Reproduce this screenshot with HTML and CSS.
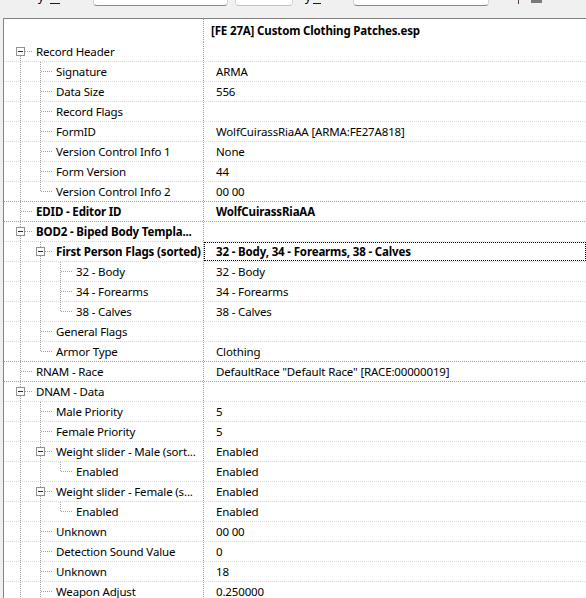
FILE: index.html
```html
<!DOCTYPE html>
<html>
<head>
<meta charset="utf-8">
<link rel="stylesheet" href="styles.css">
</head>
<body>
<div class="toolbar">
  <span class="lbl lbl1">y</span><span class="acc acc1"></span>
  <span class="field f1"></span>
  <span class="field f2"></span>
  <span class="lbl lbl2">y</span><span class="acc acc2"></span>
  <span class="field f3"></span>
  <span class="tick"></span>
  <span class="chk"></span>
</div>
<div class="tree">
  <div class="hdr"><div class="name"></div><div class="val">[FE 27A] Custom Clothing Patches.esp</div></div>

  <div class="row"><div class="name"><span class="g exp first"><i></i></span><span class="lb">Record Header</span></div><div class="val"><div class="vt"></div></div></div>
  <div class="row"><div class="name"><span class="g p"></span><span class="g tee"></span><span class="lb">Signature</span></div><div class="val"><div class="vt">ARMA</div></div></div>
  <div class="row"><div class="name"><span class="g p"></span><span class="g tee"></span><span class="lb">Data Size</span></div><div class="val"><div class="vt">556</div></div></div>
  <div class="row"><div class="name"><span class="g p"></span><span class="g tee"></span><span class="lb">Record Flags</span></div><div class="val"><div class="vt"></div></div></div>
  <div class="row"><div class="name"><span class="g p"></span><span class="g tee"></span><span class="lb">FormID</span></div><div class="val"><div class="vt">WolfCuirassRiaAA [ARMA:FE27A818]</div></div></div>
  <div class="row"><div class="name"><span class="g p"></span><span class="g tee"></span><span class="lb">Version Control Info 1</span></div><div class="val"><div class="vt">None</div></div></div>
  <div class="row"><div class="name"><span class="g p"></span><span class="g tee"></span><span class="lb">Form Version</span></div><div class="val"><div class="vt">44</div></div></div>
  <div class="row gsep"><div class="name"><span class="g p"></span><span class="g elb"></span><span class="lb">Version Control Info 2</span></div><div class="val"><div class="vt">00 00</div></div></div>

  <div class="row gsep bold"><div class="name"><span class="g tee"></span><span class="lb">EDID - Editor ID</span></div><div class="val"><div class="vt">WolfCuirassRiaAA</div></div></div>

  <div class="row bold"><div class="name"><span class="g exp"><i></i></span><span class="lb">BOD2 - Biped Body Templa...</span></div><div class="val"><div class="vt"></div></div></div>
  <div class="row bold"><div class="name"><span class="g p"></span><span class="g exp"><i></i></span><span class="lb">First Person Flags (sorted)</span></div><div class="val"><div class="vt focus">32 - Body, 34 - Forearms, 38 - Calves</div></div></div>
  <div class="row"><div class="name"><span class="g p"></span><span class="g p"></span><span class="g tee"></span><span class="lb">32 - Body</span></div><div class="val"><div class="vt">32 - Body</div></div></div>
  <div class="row"><div class="name"><span class="g p"></span><span class="g p"></span><span class="g tee"></span><span class="lb">34 - Forearms</span></div><div class="val"><div class="vt">34 - Forearms</div></div></div>
  <div class="row"><div class="name"><span class="g p"></span><span class="g p"></span><span class="g elb"></span><span class="lb">38 - Calves</span></div><div class="val"><div class="vt">38 - Calves</div></div></div>
  <div class="row"><div class="name"><span class="g p"></span><span class="g tee"></span><span class="lb">General Flags</span></div><div class="val"><div class="vt"></div></div></div>
  <div class="row gsep"><div class="name"><span class="g p"></span><span class="g elb"></span><span class="lb">Armor Type</span></div><div class="val"><div class="vt">Clothing</div></div></div>

  <div class="row gsep"><div class="name"><span class="g tee"></span><span class="lb">RNAM - Race</span></div><div class="val"><div class="vt">DefaultRace "Default Race" [RACE:00000019]</div></div></div>

  <div class="row"><div class="name"><span class="g exp"><i></i></span><span class="lb">DNAM - Data</span></div><div class="val"><div class="vt"></div></div></div>
  <div class="row"><div class="name"><span class="g p"></span><span class="g tee"></span><span class="lb">Male Priority</span></div><div class="val"><div class="vt">5</div></div></div>
  <div class="row"><div class="name"><span class="g p"></span><span class="g tee"></span><span class="lb">Female Priority</span></div><div class="val"><div class="vt">5</div></div></div>
  <div class="row"><div class="name"><span class="g p"></span><span class="g exp"><i></i></span><span class="lb">Weight slider - Male (sort...</span></div><div class="val"><div class="vt">Enabled</div></div></div>
  <div class="row"><div class="name"><span class="g p"></span><span class="g p"></span><span class="g elb"></span><span class="lb">Enabled</span></div><div class="val"><div class="vt">Enabled</div></div></div>
  <div class="row"><div class="name"><span class="g p"></span><span class="g exp"><i></i></span><span class="lb">Weight slider - Female (s...</span></div><div class="val"><div class="vt">Enabled</div></div></div>
  <div class="row"><div class="name"><span class="g p"></span><span class="g p"></span><span class="g elb"></span><span class="lb">Enabled</span></div><div class="val"><div class="vt">Enabled</div></div></div>
  <div class="row"><div class="name"><span class="g p"></span><span class="g tee"></span><span class="lb">Unknown</span></div><div class="val"><div class="vt">00 00</div></div></div>
  <div class="row"><div class="name"><span class="g p"></span><span class="g tee"></span><span class="lb">Detection Sound Value</span></div><div class="val"><div class="vt">0</div></div></div>
  <div class="row"><div class="name"><span class="g p"></span><span class="g tee"></span><span class="lb">Unknown</span></div><div class="val"><div class="vt">18</div></div></div>
  <div class="row"><div class="name"><span class="g p"></span><span class="g tee"></span><span class="lb">Weapon Adjust</span></div><div class="val"><div class="vt">0.250000</div></div></div>
</div>
</body>
</html>
```
FILE: styles.css
```css
* { box-sizing: border-box; }
html, body { margin: 0; padding: 0; }
body {
  background: #f0f0f0;
  width: 586px;
  height: 598px;
  overflow: hidden;
  font-family: "Noto Sans", "DejaVu Sans", sans-serif;
  font-size: 11.5px;
  letter-spacing: -0.15px;
  color: #000;
}

/* clipped toolbar strip at the top */
.toolbar {
  display: flex;
  align-items: flex-start;
  height: 18px;
  overflow: hidden;
  font-size: 12px;
  line-height: 12px;
}
.lbl { flex: none; width: 6px; margin-top: -9px; }
.lbl1 { margin-left: 38px; }
.lbl2 { margin-left: 12px; }
.acc { flex: none; height: 1px; margin-top: 3px; background: #1a1a1a; }
.acc1 { margin-left: 6px; width: 10px; }
.acc2 { margin-left: 2px; width: 8px; }
.field {
  flex: none;
  height: 16px;
  margin-top: -10px;
  background: #fff;
  border: 1px solid #d3d3d3;
  border-bottom-color: #8a8a8a;
  border-radius: 0 0 4px 4px;
}
.f1 { margin-left: 33px; width: 135px; }
.f2 { margin-left: 7px; width: 58px; border-bottom-color: #c4c4c4; }
.f3 { margin-left: 32px; width: 136px; }
.tick { flex: none; margin-left: 29px; width: 1px; height: 4px; background: #5a3a3a; }
.chk { flex: none; margin-left: 12px; width: 11px; height: 3px; background: #7a7a7a; }

/* tree view */
.tree {
  margin-left: 3px;
  height: 580px;
  overflow: hidden;
  background: #fff;
  border-top: 1px solid #838383;
  border-left: 1px solid #838383;
}
.hdr, .row {
  display: grid;
  grid-template-columns: 199px 1fr;
}
.hdr { height: 23px; }
.hdr .val { font-weight: 700; padding-left: 8px; line-height: 23px; }
.row {
  height: 20px;
  background: repeating-linear-gradient(to right, #d8d8d8 0 1px, transparent 1px 2px) left bottom / 100% 1px no-repeat;
}
.row.gsep {
  background-image: repeating-linear-gradient(to right, #a0a0a0 0 1px, transparent 1px 2px);
}
.bold { font-weight: 700; }
.val {
  white-space: nowrap;
  overflow: hidden;
  background: repeating-linear-gradient(to bottom, #a0a0a0 0 1px, transparent 1px 2px) left top / 1px 100% no-repeat;
}
.vt {
  margin-left: 1px;
  height: 19px;
  line-height: 19px;
  padding-left: 12px;
}
.focus { outline: 1px dotted #000; outline-offset: -1px; }

.name {
  display: flex;
  height: 20px;
  padding-left: 6px;
  white-space: nowrap;
  overflow: hidden;
}
.lb { margin-left: 4px; line-height: 19px; }

.g { flex: none; width: 20px; height: 20px; }
.p {
  background: repeating-linear-gradient(to bottom, #a0a0a0 0 1px, transparent 1px 2px) 10px 0 / 1px 20px no-repeat;
}
.tee, .exp {
  width: 22px;
  background:
    repeating-linear-gradient(to right, #a0a0a0 0 1px, transparent 1px 2px) 11px 9px / 11px 1px no-repeat,
    repeating-linear-gradient(to bottom, #a0a0a0 0 1px, transparent 1px 2px) 10px 0 / 1px 20px no-repeat;
}
.elb {
  width: 22px;
  background:
    repeating-linear-gradient(to right, #a0a0a0 0 1px, transparent 1px 2px) 11px 9px / 11px 1px no-repeat,
    repeating-linear-gradient(to bottom, #a0a0a0 0 1px, transparent 1px 2px) 10px 0 / 1px 10px no-repeat;
}
.exp.first {
  background:
    repeating-linear-gradient(to right, #a0a0a0 0 1px, transparent 1px 2px) 11px 9px / 11px 1px no-repeat,
    repeating-linear-gradient(to bottom, #a0a0a0 0 1px, transparent 1px 2px) 10px 10px / 1px 10px no-repeat;
}
.exp { padding: 5px 0 0 6px; }
.exp i {
  display: block;
  width: 9px;
  height: 9px;
  border: 1px solid #919191;
  background: #fff;
}
.exp i::before {
  content: "";
  display: block;
  width: 5px;
  height: 1px;
  margin: 3px 0 0 1px;
  background: #2a2a2a;
}
```
